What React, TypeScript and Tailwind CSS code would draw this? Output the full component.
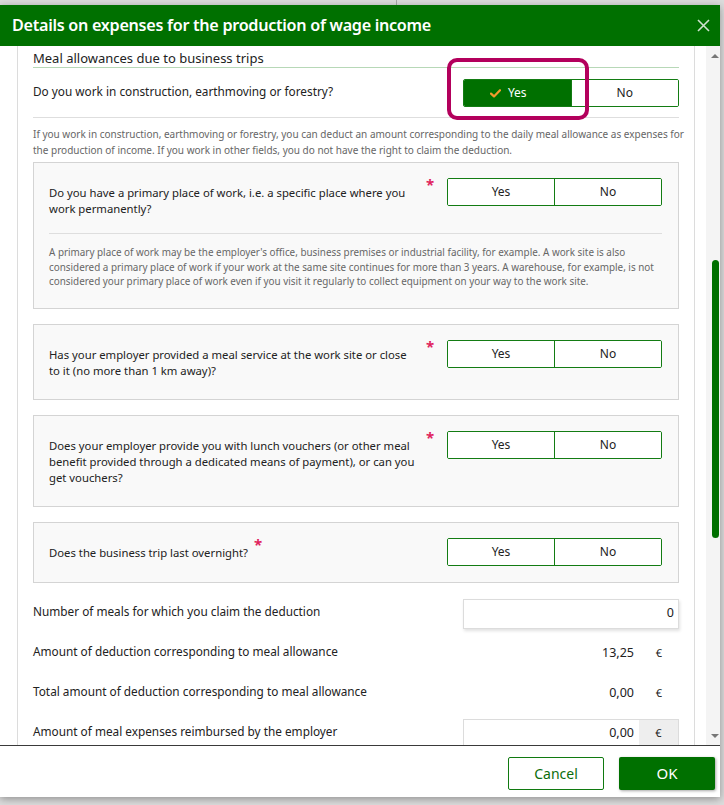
import React from "react";

const CheckIcon = () => (
  <svg width="11" height="9" viewBox="0 0 11 9" fill="none">
    <path d="M1 4.6L4 7.4L10 1.2" stroke="#f39a2c" strokeWidth="2.2" strokeLinecap="round" strokeLinejoin="round" />
  </svg>
);

const Toggle = ({ selected = false, wide = false }: { selected?: boolean; wide?: boolean }) => (
  <div
    className={`flex h-[28px] ${wide ? "w-[216px]" : "w-[215px]"} shrink-0 border border-[#137c13] rounded-[2px] overflow-hidden text-[12px] text-[#222]`}
  >
    <div
      className={`flex flex-1 items-center justify-center border-r border-[#137c13] ${
        selected ? "bg-[#007000] text-white" : "bg-white"
      }`}
    >
      <span className="relative">
        {selected && (
          <span className="absolute right-full mr-[7px] top-[5px] flex">
            <CheckIcon />
          </span>
        )}
        Yes
      </span>
    </div>
    <div className="flex flex-1 items-center justify-center bg-white">No</div>
  </div>
);

const Asterisk = () => (
  <span className="text-[#e0245e] text-[15px] leading-[10px] font-bold ml-[6px] mt-[1px]">*</span>
);

const QuestionBox = ({ lines, fixed = true }: { lines: string[]; fixed?: boolean }) => (
  <div className="border border-[#d4d4d4] bg-[#f9f9f9] pt-[15px] pl-[15px] pr-[16px] pb-[16px]">
    <div className="flex items-start justify-between">
      <div className="flex items-start">
        <div
          className={`${fixed ? "w-[371px]" : ""} mt-[7px] mb-[4px] whitespace-nowrap text-[11.3px] leading-[16px] text-[#222]`}
        >
          {lines.map((l, i) => (
            <div key={i}>{l}</div>
          ))}
        </div>
        <Asterisk />
      </div>
      <Toggle />
    </div>
  </div>
);

const ValueRow = ({ label, children }: { label: string; children: React.ReactNode }) => (
  <div className="flex h-[40px] items-center justify-between">
    <div className="text-[11.8px] text-[#222] -mt-[4px] whitespace-nowrap">{label}</div>
    <div className="w-[216px]">{children}</div>
  </div>
);

export default function App() {
  return (
    <div className="w-[724px] h-[805px] bg-[#dcdcdc] overflow-hidden font-['Noto_Sans',sans-serif]">
      <div className="h-[5px]">
        <div className="ml-[396px] w-px h-full bg-[#a8a8a8]" />
      </div>
      <div className="w-[720px] h-[792px] bg-white flex flex-col shadow-[0_2px_8px_rgba(0,0,0,0.35)]">
        {/* header */}
        <div className="h-[41px] bg-[#007000] flex items-center justify-between pl-[12px] pr-[10px]">
          <h1 className="text-white text-[16.2px] font-semibold tracking-[-0.3px] whitespace-nowrap">
            Details on expenses for the production of wage income
          </h1>
          <svg width="13" height="13" viewBox="0 0 13 13">
            <path d="M1 1L12 12M12 1L1 12" stroke="#cfe2cf" strokeWidth="1.6" />
          </svg>
        </div>

        {/* body */}
        <div className="h-[699px] flex">
          <div className="flex-1 overflow-hidden pl-[17px] pr-[11px]">
            <div className="h-full border-x border-[#dcdcdc] px-[15px]">
              <div className="pt-[4px] pb-[1px] text-[13px] leading-[16px] text-[#222] border-b border-[#b7d8b7]">
                Meal allowances due to business trips
              </div>

              <div className="flex h-[50px] items-center justify-between border-b border-[#dedede]">
                <div className="text-[11.8px] text-[#222] -mt-[1px] whitespace-nowrap">
                  Do you work in construction, earthmoving or forestry?
                </div>
                <div className="relative">
                  <Toggle selected wide />
                  <div className="absolute left-[-16px] top-[-21px] w-[142px] h-[62px] border-[4px] border-[#b3005c] rounded-[10px]" />
                </div>
              </div>

              <div className="pt-[8px] text-[10px] leading-[16px] text-[#666] whitespace-nowrap">
                <div>
                  If you work in construction, earthmoving or forestry, you can deduct an amount corresponding to the daily
                  meal allowance as expenses for
                </div>
                <div>the production of income. If you work in other fields, you do not have the right to claim the deduction.</div>
              </div>

              <div className="mt-[4px] flex flex-col gap-[15px]">
                <div className="border border-[#d4d4d4] bg-[#f9f9f9] pt-[15px] pl-[15px] pr-[16px] pb-[19px]">
                  <div className="flex items-start justify-between">
                    <div className="flex items-start">
                      <div className="w-[371px] mt-[7px] whitespace-nowrap text-[11.3px] leading-[16px] text-[#222]">
                        <div>Do you have a primary place of work, i.e. a specific place where you</div>
                        <div>work permanently?</div>
                      </div>
                      <Asterisk />
                    </div>
                    <Toggle />
                  </div>
                  <div className="mt-[16px] border-t border-[#dedede] pt-[11px] text-[9.9px] leading-[14.5px] text-[#666] whitespace-nowrap">
                    <div>
                      A primary place of work may be the employer's office, business premises or industrial facility, for
                      example. A work site is also
                    </div>
                    <div>
                      considered a primary place of work if your work at the same site continues for more than 3 years. A
                      warehouse, for example, is not
                    </div>
                    <div>considered your primary place of work even if you visit it regularly to collect equipment on your way to the work site.</div>
                  </div>
                </div>

                <QuestionBox
                  lines={[
                    "Has your employer provided a meal service at the work site or close",
                    "to it (no more than 1 km away)?",
                  ]}
                />
                <QuestionBox
                  lines={[
                    "Does your employer provide you with lunch vouchers (or other meal",
                    "benefit provided through a dedicated means of payment), or can you",
                    "get vouchers?",
                  ]}
                />
                <QuestionBox lines={["Does the business trip last overnight?"]} fixed={false} />
              </div>

              <div className="mt-[11px]">
                <ValueRow label="Number of meals for which you claim the deduction">
                  <div className="h-[30px] border border-[#dcdcdc] bg-white shadow-[1px_2px_3px_rgba(0,0,0,0.12)] flex items-center justify-end pr-[4px] text-[12.5px] text-[#222]">
                    0
                  </div>
                </ValueRow>
                <ValueRow label="Amount of deduction corresponding to meal allowance">
                  <div className="flex items-center text-[12.5px] text-[#222]">
                    <div className="flex-1 text-right pr-[5px]">13,25</div>
                    <div className="w-[40px] text-center text-[11px]">€</div>
                  </div>
                </ValueRow>
                <ValueRow label="Total amount of deduction corresponding to meal allowance">
                  <div className="flex items-center text-[12.5px] text-[#222]">
                    <div className="flex-1 text-right pr-[5px]">0,00</div>
                    <div className="w-[40px] text-center text-[11px]">€</div>
                  </div>
                </ValueRow>
                <ValueRow label="Amount of meal expenses reimbursed by the employer">
                  <div className="h-[30px] border border-[#dcdcdc] bg-white flex items-stretch text-[12.5px] text-[#222]">
                    <div className="flex-1 flex items-center justify-end pr-[5px]">0,00</div>
                    <div className="w-[39px] bg-[#eeeeee] flex items-center justify-center text-[11px]">€</div>
                  </div>
                </ValueRow>
              </div>
            </div>
          </div>

          {/* scrollbar */}
          <div className="w-[14px] bg-[#f4f4f4] flex flex-col">
            <div className="h-[12px] flex items-end justify-center pl-[3px]">
              <div className="w-0 h-0 border-x-[4px] border-x-transparent border-b-[4px] border-b-[#777]" />
            </div>
            <div className="h-[202px]" />
            <div className="ml-[6px] w-[7px] h-[278px] rounded-full bg-[#007000]" />
            <div className="flex-1" />
            <div className="h-[12px] flex items-start justify-center pl-[3px] pt-[1px]">
              <div className="w-0 h-0 border-x-[4px] border-x-transparent border-t-[4px] border-t-[#777]" />
            </div>
          </div>
        </div>

        {/* footer */}
        <div className="flex-1 border-t border-[#3a3a3a] flex justify-end items-start pt-[11px] pr-[5px] gap-[15px]">
          <button className="w-[96px] h-[33px] border border-[#107a10] rounded-[2px] text-[14px] text-[#0b6e0b] bg-white">
            Cancel
          </button>
          <button className="w-[96px] h-[33px] rounded-[2px] text-[15px] text-white bg-[#007000] shadow-[1px_1px_3px_rgba(0,0,0,0.35)]">
            OK
          </button>
        </div>
      </div>
    </div>
  );
}
